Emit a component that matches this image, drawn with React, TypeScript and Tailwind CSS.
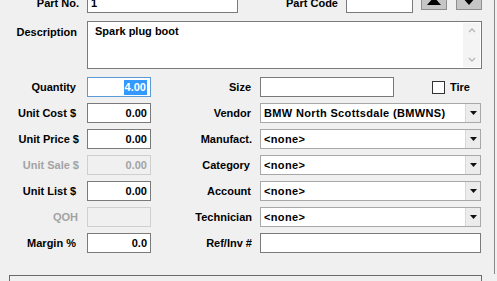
import React from "react";

const font = { fontFamily: '"Liberation Sans", Arial, sans-serif' };

function Label({ text, width, pad, disabled }: { text: string; width: string; pad?: string; disabled?: boolean }) {
  return (
    <div className={`${width} ${pad ?? ""} shrink-0 text-right leading-[20px] ${disabled ? "text-[#a3a3a3]" : "text-black"}`}>
      {text}
    </div>
  );
}

function NumField({ value, disabled, focused }: { value: string; disabled?: boolean; focused?: boolean }) {
  if (focused) {
    return (
      <div className="ml-2 flex h-5 w-16 shrink-0 items-center justify-end border border-[#5b9bd5] bg-white pr-[3px]">
        <span className="bg-[#3399ff] px-[1px] leading-[15px] text-white">{value}</span>
      </div>
    );
  }
  return (
    <div
      className={`ml-2 h-5 w-16 shrink-0 border pr-[3px] text-right leading-[18px] ${
        disabled ? "border-[#cfcfcf] bg-[#f0f0f0] text-[#a3a3a3]" : "border-[#7a7a7a] bg-white text-black"
      }`}
    >
      {value}
    </div>
  );
}

function Combo({ value }: { value: string }) {
  return (
    <div className="ml-2 flex h-5 w-[221px] shrink-0 border border-[#a8a8a8] bg-white">
      <div className="flex-1 pl-[3px] leading-[18px] tracking-[0.35px] text-black">{value}</div>
      <div className="flex w-[15px] items-center justify-center border-l border-[#d8d8d8] bg-[#ececec]">
        <svg width="7" height="4" viewBox="0 0 7 4">
          <path d="M0 0 H7 L3.5 4 Z" fill="#111" />
        </svg>
      </div>
    </div>
  );
}

function Row({ children }: { children: React.ReactNode }) {
  return <div className="flex h-5 items-center">{children}</div>;
}

function ArrowButton({ up }: { up?: boolean }) {
  return (
    <div className="flex h-5 w-[26px] shrink-0 items-end justify-center border border-[#8e8e8e] bg-[#c6c6c6] pb-[4px]">
      <svg width="14" height="8" viewBox="0 0 14 8">
        <path d={up ? "M0 8 H14 L7 0 Z" : "M0 0 H14 L7 8 Z"} fill="#000" />
      </svg>
    </div>
  );
}

export default function App() {
  return (
    <div className="h-[281px] w-[497px] overflow-hidden bg-[#f0f0f0] text-[11px] font-bold" style={font}>
      <div className="h-[281px] w-[495px] border-r border-[#8a8a8a]">
        <div className="-mt-[7px] flex flex-col">
          {/* part no row */}
          <div className="flex h-5 items-start">
            <Label text="Part No." width="w-[79px]" />
            <div className="ml-2 h-5 w-[151px] border border-[#7a7a7a] bg-white pl-[3px] leading-[18px]">1</div>
            <div className="w-[100px] shrink-0 text-right leading-[20px]">Part Code</div>
            <div className="ml-2 h-5 w-[67px] shrink-0 border border-[#7a7a7a] bg-white" />
            <div className="-mt-[3px] ml-2 flex gap-[9px]">
              <ArrowButton up />
              <ArrowButton />
            </div>
          </div>

          {/* description */}
          <div className="mt-2 flex items-start">
            <div className="w-[77px] shrink-0 pt-[3px] text-right">Description</div>
            <div className="ml-[10px] flex h-12 w-[395px] border border-[#7a7a7a] bg-white">
              <div className="flex-1 pl-[7px] pt-[2px] leading-[14px] text-black">Spark plug boot</div>
              <div className="my-[1px] mr-[1px] flex w-[17px] flex-col items-center justify-between bg-[#f4f4f4] py-[5px]">
                <svg width="8" height="5" viewBox="0 0 8 5">
                  <path d="M1 4 L4 1 L7 4" stroke="#b5b5b5" strokeWidth="1.3" fill="none" />
                </svg>
                <svg width="8" height="5" viewBox="0 0 8 5">
                  <path d="M1 1 L4 4 L7 1" stroke="#b5b5b5" strokeWidth="1.3" fill="none" />
                </svg>
              </div>
            </div>
          </div>

          <div className="mt-2 flex flex-col gap-[6px]">
            <Row>
              <Label text="Quantity" width="w-[79px]" pad="pr-[3px]" />
              <NumField value="4.00" focused />
              <Label text="Size" width="w-[101px]" pad="pr-[1px]" />
              <div className="ml-2 h-5 w-[134px] shrink-0 border border-[#7a7a7a] bg-white" />
              <div className="ml-[38px] h-[13px] w-[13px] shrink-0 border border-[#333] bg-white" />
              <div className="ml-[5px]">Tire</div>
            </Row>
            <Row>
              <Label text="Unit Cost $" width="w-[79px]" pad="pr-[3px]" />
              <NumField value="0.00" />
              <Label text="Vendor" width="w-[101px]" pad="pr-[1px]" />
              <Combo value="BMW North Scottsdale (BMWNS)" />
            </Row>
            <Row>
              <Label text="Unit Price $" width="w-[79px]" />
              <NumField value="0.00" />
              <Label text="Manufact." width="w-[101px]" />
              <Combo value="<none>" />
            </Row>
            <Row>
              <Label text="Unit Sale $" width="w-[79px]" disabled />
              <NumField value="0.00" disabled />
              <Label text="Category" width="w-[101px]" pad="pr-[2px]" />
              <Combo value="<none>" />
            </Row>
            <Row>
              <Label text="Unit List $" width="w-[79px]" pad="pr-[3px]" />
              <NumField value="0.00" />
              <Label text="Account" width="w-[101px]" pad="pr-[1px]" />
              <Combo value="<none>" />
            </Row>
            <Row>
              <Label text="QOH" width="w-[79px]" pad="pr-[1px]" disabled />
              <NumField value="" disabled />
              <Label text="Technician" width="w-[101px]" />
              <Combo value="<none>" />
            </Row>
            <Row>
              <Label text="Margin %" width="w-[79px]" pad="pr-[3px]" />
              <NumField value="0.0" />
              <Label text="Ref/Inv #" width="w-[101px]" />
              <div className="ml-2 h-5 w-[221px] shrink-0 border border-[#7a7a7a] bg-white" />
            </Row>
          </div>

          <div className="ml-[9px] mt-[22px] h-10 w-[473px] border border-[#6a6a6a] bg-[#f0f0f0]" />
        </div>
      </div>
    </div>
  );
}
